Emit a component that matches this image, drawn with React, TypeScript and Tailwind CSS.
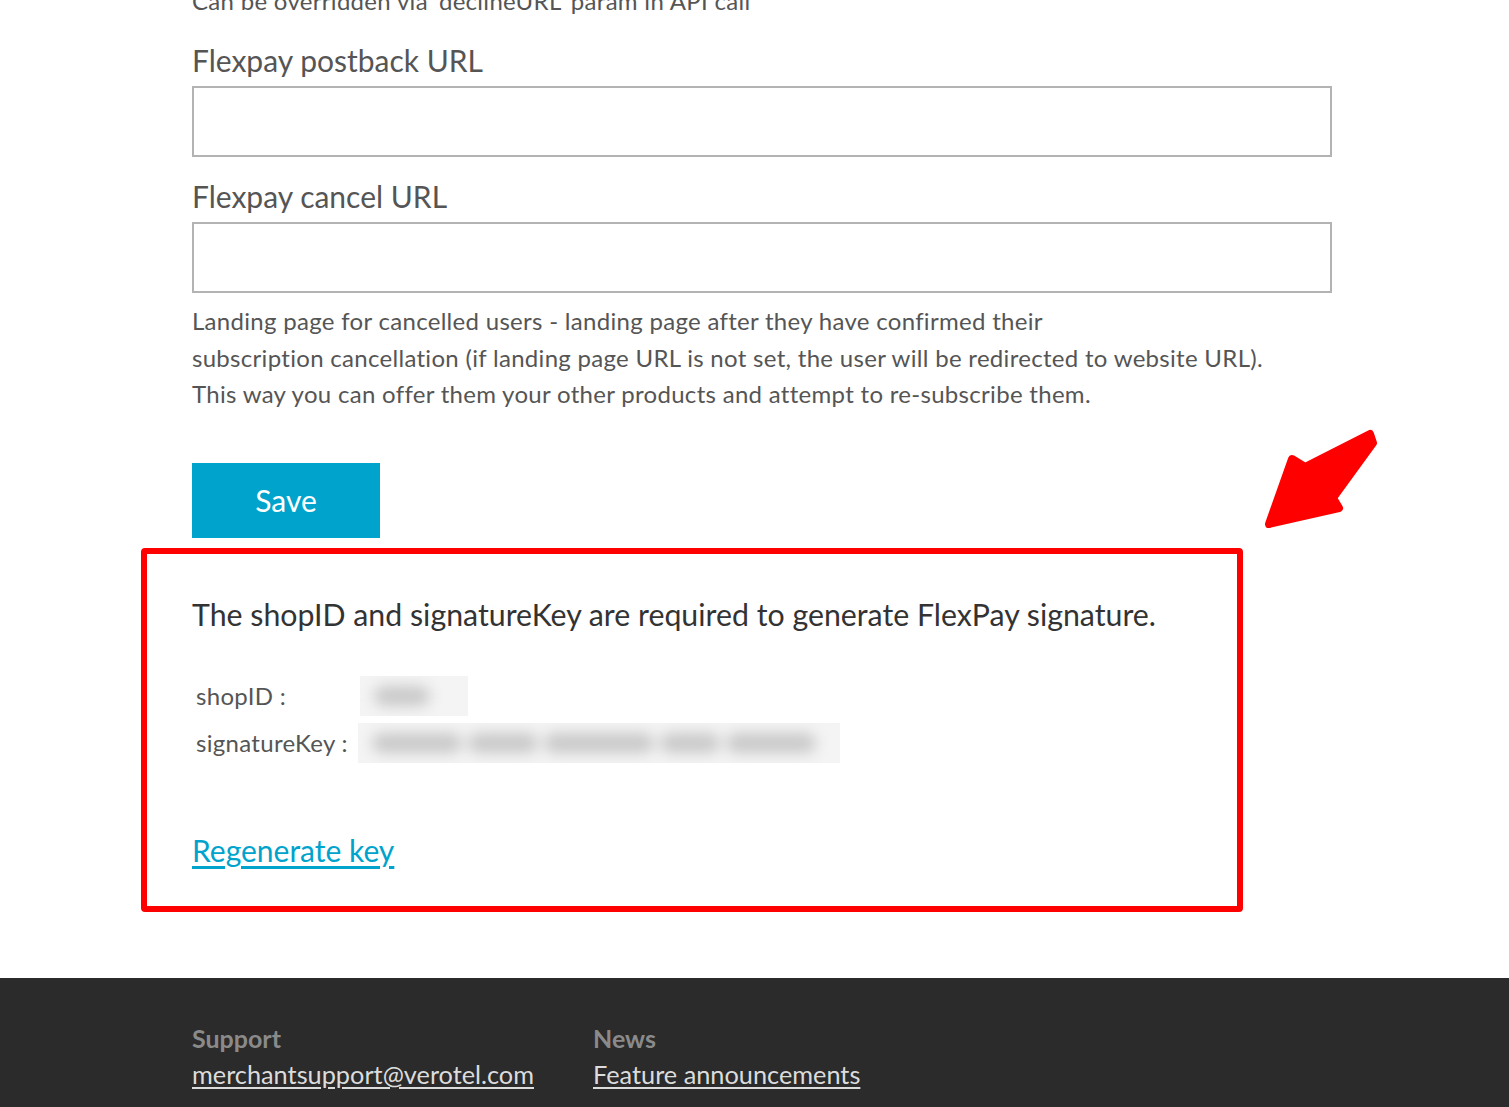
import React from 'react';

const font = { fontFamily: 'Lato, "Noto Sans", sans-serif' };

function Field({ label }: { label: string }) {
  return (
    <div className="flex flex-col">
      <label className="text-[30px] leading-[40px] text-[#555] mb-[6px]">{label}</label>
      <input className="h-[71px] w-full border-2 border-[#b3b3b3] bg-white outline-none" />
    </div>
  );
}

function Blurred({ width, blobs }: { width: number; blobs: number[] }) {
  return (
    <div className="relative h-[40px] overflow-hidden bg-[#f4f4f4]" style={{ width }}>
      <div className="absolute inset-0 flex items-center gap-[6px] px-[14px] blur-[7px]">
        {blobs.map((w, i) => (
          <span key={i} className="h-[20px] rounded-full bg-[#c9c9c9]" style={{ width: w }} />
        ))}
      </div>
    </div>
  );
}

export default function App() {
  return (
    <div className="min-h-screen bg-white overflow-hidden" style={font}>
      <div className="pl-[192px] w-[1332px]">
        <p className="-mt-[17px] text-[24px] tracking-[0.3px] leading-[36px] text-[#555]">
          Can be overridden via 'declineURL' param in API call
        </p>

        <div className="mt-[21px] flex flex-col gap-[19px]">
          <Field label="Flexpay postback URL" />
          <Field label="Flexpay cancel URL" />
        </div>

        <p className="mt-[10px] text-[24px] tracking-[0.3px] leading-[36.5px] text-[#555]">
          Landing page for cancelled users - landing page after they have confirmed their
          <br />
          subscription cancellation (if landing page URL is not set, the user will be redirected to website URL).
          <br />
          This way you can offer them your other products and attempt to re-subscribe them.
        </p>

        <button className="mt-[50px] h-[75px] w-[188px] bg-[#00a3cc] text-white text-[30px]">
          Save
        </button>

        {/* annotated key block */}
        <div className="relative mt-[10px] -ml-[51px] w-[1102px]">
          <div className="h-[364px] rounded-[4px] border-[6px] border-[#ff0000] pl-[45px] pt-[40px]">
            <h3 className="text-[30.3px] leading-[40px] text-[#333]">
              The shopID and signatureKey are required to generate FlexPay signature.
            </h3>
            <div className="mt-[42px] grid grid-cols-[164px_auto] items-center gap-y-[7px] pl-[4px] text-[24px] tracking-[0.3px] text-[#555]">
              <span>shopID :</span>
              <Blurred width={108} blobs={[56]} />
              <span>signatureKey :</span>
              <div className="-ml-[2px]">
                <Blurred width={482} blobs={[90, 70, 110, 60, 90]} />
              </div>
            </div>
            <a href="#" className="mt-[67px] inline-block text-[30px] leading-[40px] text-[#00a3cc] underline underline-offset-[4px]">
              Regenerate key
            </a>
          </div>
          <svg
            className="absolute left-[1121px] -top-[121px]"
            width="120"
            height="110"
            viewBox="1262 426 120 110"
          >
            <polygon
              points="1269,523 1292,458 1305,466 1370,433 1373,442 1333,497 1339,507"
              fill="#ff0000"
              stroke="#ff0000"
              strokeWidth="8"
              strokeLinejoin="round"
            />
          </svg>
        </div>
      </div>

      <footer className="mt-[66px] bg-[#2b2b2b] pl-[192px] pt-[42px] pb-[20px]">
        <div className="flex gap-[59px]">
          <div className="flex flex-col">
            <span className="text-[25px] leading-[36px] font-bold text-[#8a8a8a]">Support</span>
            <a href="#" className="text-[25.3px] leading-[36px] text-[#dcdcdc] underline underline-offset-[3px]">
              merchantsupport@verotel.com
            </a>
          </div>
          <div className="flex flex-col">
            <span className="text-[25px] leading-[36px] font-bold text-[#8a8a8a]">News</span>
            <a href="#" className="text-[25.3px] leading-[36px] text-[#dcdcdc] underline underline-offset-[3px]">
              Feature announcements
            </a>
          </div>
        </div>
      </footer>
    </div>
  );
}
